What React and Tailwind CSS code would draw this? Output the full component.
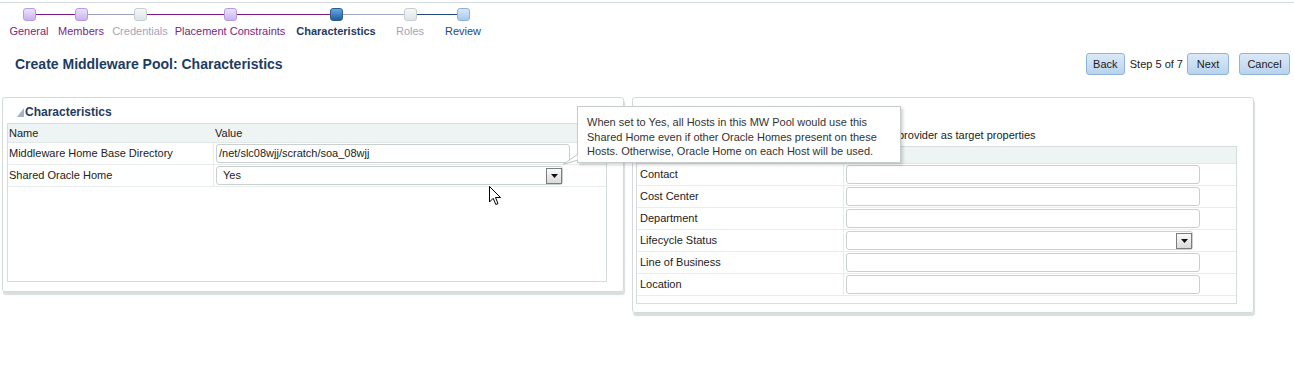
const steps = [
  { label: "General", w: 50, node: "visited", text: "text-[#7a2682]", left: null, right: "bg-[#7d1d83]" },
  { label: "Members", w: 54, node: "visited", text: "text-[#7a2682]", left: "bg-[#7d1d83]", right: "bg-[#9da2c2]" },
  { label: "Credentials", w: 64, node: "off", text: "text-[#a3a3bd]", left: "bg-[#9da2c2]", right: "bg-[#7d1d83]" },
  { label: "Placement Constraints", w: 116, node: "visited", text: "text-[#7a2682]", left: "bg-[#7d1d83]", right: "bg-[#7d1d83]" },
  { label: "Characteristics", w: 96, node: "current", text: "text-[#1f3b63] font-bold", left: "bg-[#7d1d83]", right: "bg-[#a2a7c4]" },
  { label: "Roles", w: 52, node: "off", text: "text-[#a3a3bd]", left: "bg-[#a2a7c4]", right: "bg-[#23497b]" },
  { label: "Review", w: 54, node: "next", text: "text-[#23497b]", left: "bg-[#23497b]", right: null },
];

const nodeStyles = {
  visited: "border-[#b59ce0] bg-linear-to-b from-[#ece2fb] to-[#c9b3ef]",
  off: "border-[#c6cece] bg-linear-to-b from-[#f4f7f7] to-[#dfe5e5]",
  current: "border-[#2b5d93] bg-linear-to-b from-[#6aa6de] to-[#215e9e]",
  next: "border-[#8cb1dc] bg-linear-to-b from-[#d8e8f8] to-[#a8c8ec]",
};

function Train() {
  return (
    <div className="flex pl-[4px] pt-[5px]">
      {steps.map((s) => (
        <div key={s.label} className="flex flex-col items-center" style={{ width: s.w }}>
          <div className="flex w-full items-center">
            <div className={`h-px flex-1 ${s.left || ""}`} />
            <div className={`h-[13px] w-[13px] rounded-[3px] border ${nodeStyles[s.node]}`} />
            <div className={`h-px flex-1 ${s.right || ""}`} />
          </div>
          <div className={`mt-[3px] whitespace-nowrap text-[11px] leading-[14px] ${s.text}`}>
            {s.label}
          </div>
        </div>
      ))}
    </div>
  );
}

function Btn({ children, className = "" }) {
  return (
    <button
      className={`h-[22px] rounded-[3px] border border-[#8fb3d9] bg-linear-to-b from-[#dbe9f8] to-[#b9d3ee] text-center text-[11px] text-[#1c1c1c] ${className}`}
    >
      {children}
    </button>
  );
}

function PanelHeader({ title }) {
  return (
    <div className="flex h-[25px] items-center gap-[1px] pl-[14px] pt-[3px]">
      {title && (
        <>
          <svg width="7" height="9" viewBox="0 0 7 9">
            <polygon points="7,0 7,9 0,9" fill="#a4b3c4" />
          </svg>
          <span className="text-[12px] font-bold text-[#1f3b63]">{title}</span>
        </>
      )}
    </div>
  );
}

function DropBox() {
  return (
    <div className="flex h-[16px] w-[16px] items-center justify-center border border-[#7d7d7d] bg-linear-to-b from-[#fbfbfb] to-[#dadada]">
      <svg width="7" height="4" viewBox="0 0 7 4">
        <polygon points="0,0 7,0 3.5,4" fill="#111" />
      </svg>
    </div>
  );
}

function TextBox({ value = "" }) {
  return (
    <div className="flex h-[19px] w-[354px] items-center rounded-[3px] border border-[#c9d0d0] bg-white pl-[2px] text-[11px] text-[#222]">
      {value}
    </div>
  );
}

function SelectBox({ value = "", w }) {
  return (
    <div
      className="flex h-[19px] items-center justify-between rounded-[3px] border border-[#c9d0d0] bg-white pl-[6px] text-[11px] text-[#222]"
      style={{ width: w }}
    >
      <span>{value}</span>
      <DropBox />
    </div>
  );
}

function Row({ name, children, nameW, pad = 1 }) {
  return (
    <div className="flex h-[22px] border-b border-[#e7eded]">
      <div className="flex items-center text-[11px] text-[#222]" style={{ width: nameW, paddingLeft: pad }}>
        {name}
      </div>
      <div className="flex flex-1 items-center border-l border-[#e7eded] pl-[2px]">{children}</div>
    </div>
  );
}

function Cursor() {
  return (
    <svg className="absolute left-[489px] top-[186px]" width="13" height="20" viewBox="0 0 13 20">
      <path d="M0.5 0.5 L0.5 16 L4.2 12.3 L6.8 18.5 L9 17.6 L6.5 11.5 L11.5 11.5 Z" fill="#fff" stroke="#000" strokeWidth="1" />
    </svg>
  );
}

export default function App() {
  const props = ["Contact", "Cost Center", "Department", "Lifecycle Status", "Line of Business", "Location"];

  return (
    <div className="relative h-[365px] w-[1294px] overflow-hidden bg-white font-['Liberation_Sans',Arial,sans-serif] text-[#222]">
      <div className="h-[3px] border-b border-[#d8dede]" />
      <Train />

      <div className="mt-[15px] flex h-[22px] items-center justify-between pl-[15px] pr-[4px]">
        <h1 className="text-[14px] font-bold text-[#1c3c62]">Create Middleware Pool: Characteristics</h1>
        <div className="flex items-center text-[11px]">
          <Btn className="w-[39px]">Back</Btn>
          <span className="ml-[5px] mr-[4px] text-[#222]">Step 5 of 7</span>
          <Btn className="w-[42px]">Next</Btn>
          <Btn className="ml-[10px] w-[51px]">Cancel</Btn>
        </div>
      </div>

      <div className="mt-[22px] flex items-start gap-[8px] pl-[2px]">
        <div className="h-[195px] w-[622px] rounded-[3px] border border-[#d3dada] shadow-[1px_3px_1px_#d9dede]">
          <PanelHeader title="Characteristics" />
          <div className="ml-[4px] h-[159px] w-[600px] border border-[#d5dddd]">
            <div className="flex h-[19px] items-center border-b border-[#dfe7e7] bg-[#eef4f4] text-[11px] text-[#222]">
              <div className="w-[205px] pl-[1px]">Name</div>
              <div className="pl-[2px]">Value</div>
            </div>
            <Row name="Middleware Home Base Directory" nameW={205}>
              <TextBox value="/net/slc08wjj/scratch/soa_08wjj" />
            </Row>
            <Row name="Shared Oracle Home" nameW={205}>
              <SelectBox value="Yes" w={347} />
            </Row>
          </div>
        </div>

        <div className="h-[216px] w-[622px] rounded-[3px] border border-[#d3dada] shadow-[1px_3px_1px_#d9dede]">
          <PanelHeader />
          <div className="mt-[2px] flex h-[21px] items-center pl-[265px] text-[11px] text-[#222]">
            provider as target properties
          </div>
          <div className="ml-[3px] h-[158px] w-[601px] border border-[#d5dddd]">
            <div className="h-[17px] border-b border-[#dfe7e7] bg-[#eef4f4]" />
            {props.map((p) => (
              <Row key={p} name={p} nameW={206} pad={3}>
                {p === "Lifecycle Status" ? <SelectBox w={347} /> : <TextBox />}
              </Row>
            ))}
          </div>
        </div>
      </div>

      <div className="absolute left-[577px] top-[106px] h-[57px] w-[324px] border border-[#c6cccc] bg-white pl-[9px] pt-[8px] text-[11px] leading-[14.5px] text-[#333] shadow-[2px_2px_3px_rgba(0,0,0,0.18)]">
        When set to Yes, all Hosts in this MW Pool would use this
        <br />
        Shared Home even if other Oracle Homes present on these
        <br />
        Hosts. Otherwise, Oracle Home on each Host will be used.
      </div>
      <svg className="absolute left-[562px] top-[150px]" width="17" height="16" viewBox="0 0 17 16">
        <polygon points="16,4 1,14.5 16,10" fill="#fff" stroke="#bfc6c6" strokeWidth="1" />
        <rect x="16" y="3" width="2" height="8" fill="#fff" />
      </svg>
      <Cursor />
    </div>
  );
}
